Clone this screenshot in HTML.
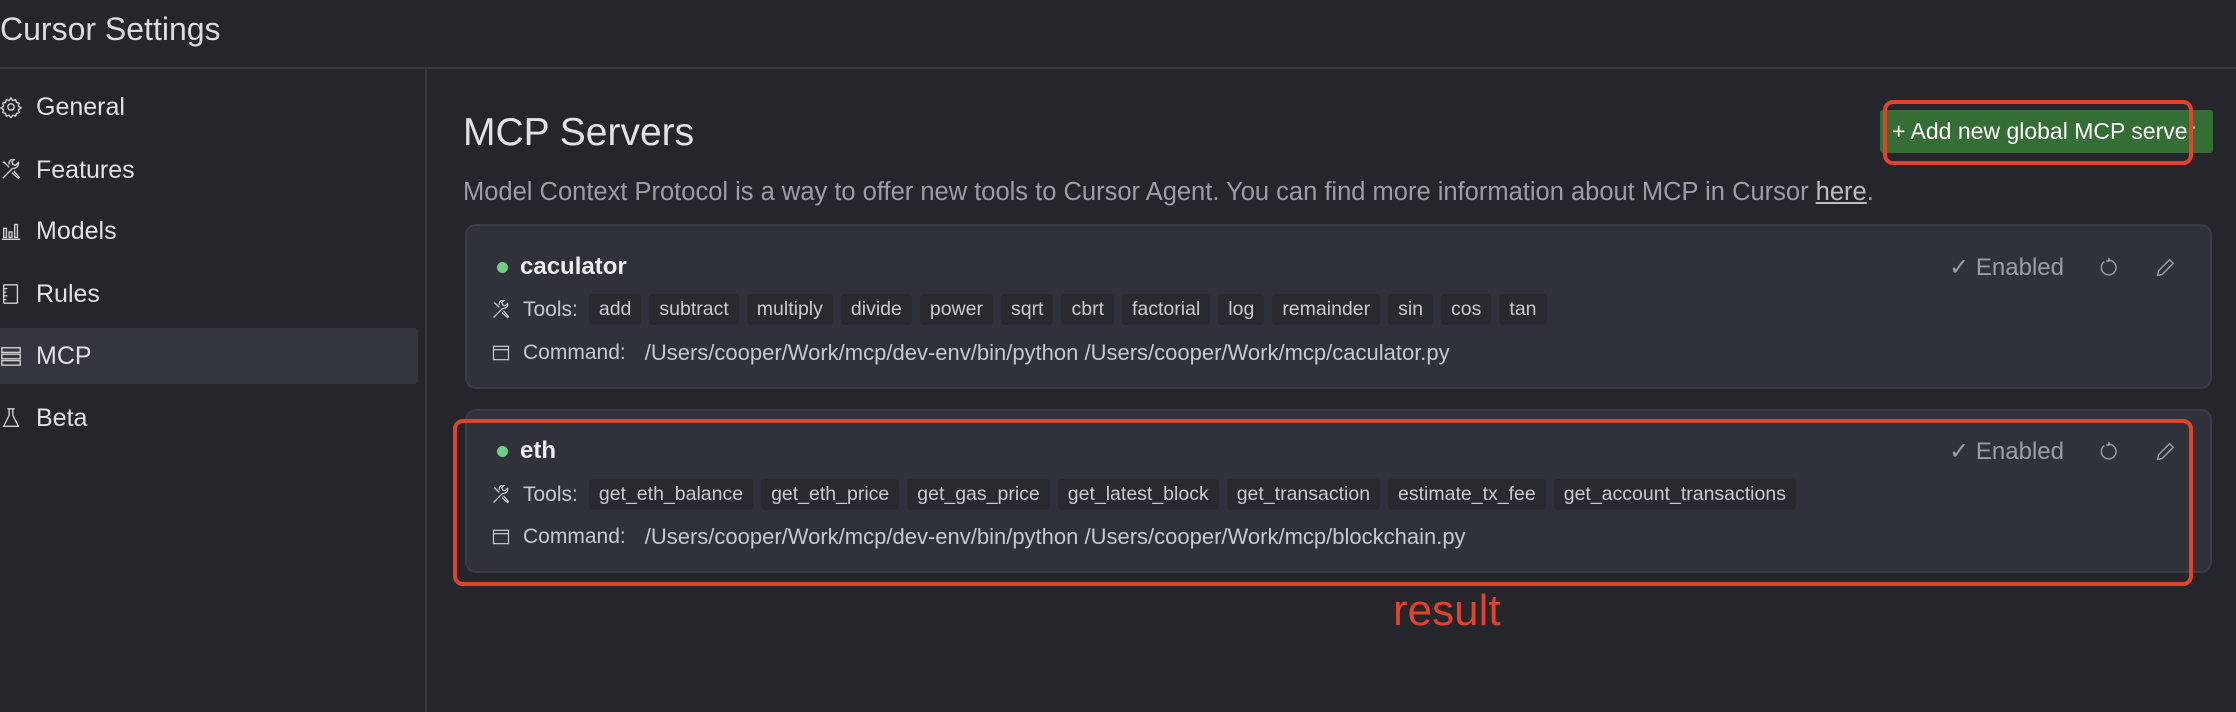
<!DOCTYPE html>
<html><head><meta charset="utf-8"><style>
*{box-sizing:border-box;margin:0;padding:0}
body{width:2236px;height:712px;background:#24262b;font-family:"Liberation Sans",sans-serif;color:#d4d6da;position:relative;overflow:hidden}
.abs{position:absolute}
.hdr{left:0;top:0;width:2236px;height:69px;border-bottom:2px solid #3a3c42}
.title{left:0;top:11px;font-size:32px;color:#dcdde0}
.div{left:425px;top:69px;width:2px;height:643px;background:#35373c}
.nav{left:0;width:418px;height:56px;display:flex;align-items:center;font-size:25px;color:#e0e1e4}
.nav svg{width:22px;height:22px;margin-right:14px;flex:none}
.nav.act{background:#33363c;border-radius:0 4px 4px 0}
h1{position:absolute;left:463px;top:111px;font-size:39px;font-weight:normal;color:#e2e3e6}
.desc{left:463px;top:178px;font-size:25.5px;color:#9a9ea6}
.desc u{color:#b9bcc2}
.btn{left:1880px;top:110px;width:333px;height:43px;background:#356e35;color:#fff;font-size:23px;display:flex;align-items:center;padding-left:12px;border-radius:3px}
.rbox{border:4px solid #e2412a;border-radius:10px}
.card{left:465px;width:1747px;background:#2f323a;border:2px solid #3a3d45;border-radius:11px}
.name{position:absolute;left:30px;font-size:24px;font-weight:bold;color:#eceef0;display:flex;align-items:center}
.name i{display:inline-block;width:11px;height:11px;border-radius:50%;background:#6fcf84;margin-right:12px}
.row{position:absolute;left:24px;display:flex;align-items:center;font-size:21px;color:#c5c8cd}
.row svg{width:20px;height:20px;margin-right:12px}
.row .lbl{margin-right:11px}
.tag{background:#282a30;border-radius:4px;padding:0 10px;height:31px;line-height:31px;margin-right:8px;font-size:19.5px;color:#c8cacf}
.cmd{margin-left:8px;font-size:22px}
.right{position:absolute;right:34px;display:flex;align-items:center;font-size:24px;color:#9a9da4}
.right svg{margin-left:34px}
</style></head><body>
<div class="abs hdr"></div>
<div class="abs title">Cursor Settings</div>
<div class="abs div"></div>

<div class="abs nav" style="top:79px"><svg viewBox="0 0 24 24" fill="none" stroke="#cfd1d5" stroke-width="1.5"><circle cx="12" cy="12" r="3.5"/><path d="M12 2l2 3 3-1 1 3 3 1-1 3 3 2-3 2 1 3-3 1-1 3-3-1-2 3-2-3-3 1-1-3-3-1 1-3-3-2 3-2-1-3 3-1 1-3 3 1z"/></svg>General</div>
<div class="abs nav" style="top:142px"><svg viewBox="0 0 24 24" fill="none" stroke="#cfd1d5" stroke-width="1.5"><path d="M3 21l11-11M14 10a5 5 0 0 0 6-6l-3 3-3-1-1-3 3-3a5 5 0 0 0-6 6M4 3l6 6M3 4l2-1M13 15l7 6 1-1-6-7"/></svg>Features</div>
<div class="abs nav" style="top:203px"><svg viewBox="0 0 24 24" fill="none" stroke="#cfd1d5" stroke-width="1.5"><path d="M2 21h20M4 9h3v10H4zM10 13h3v6h-3zM16 5h3v14h-3z"/></svg>Models</div>
<div class="abs nav" style="top:266px"><svg viewBox="0 0 24 24" fill="none" stroke="#cfd1d5" stroke-width="1.5"><rect x="4" y="2" width="15" height="20" rx="1"/><path d="M4 6h4M4 10h3M4 14h4M4 18h3"/></svg>Rules</div>
<div class="abs nav act" style="top:328px"><svg viewBox="0 0 24 24" fill="none" stroke="#cfd1d5" stroke-width="1.5"><rect x="2" y="3" width="20" height="5"/><rect x="2" y="10" width="20" height="5"/><rect x="2" y="17" width="20" height="5"/></svg>MCP</div>
<div class="abs nav" style="top:390px"><svg viewBox="0 0 24 24" fill="none" stroke="#cfd1d5" stroke-width="1.5"><path d="M8 2h8M10 2v7L4 21h16L14 9V2"/></svg>Beta</div>

<h1>MCP Servers</h1>
<div class="abs btn">+ Add new global MCP server</div>
<div class="abs rbox" style="left:1883px;top:100px;width:310px;height:65px"></div>
<div class="abs desc">Model Context Protocol is a way to offer new tools to Cursor Agent. You can find more information about MCP in Cursor <u>here</u>.</div>

<div class="abs card" style="top:224px;height:165px">
 <div class="name" style="top:27px"><i></i>caculator</div>
 <div class="right" style="top:27px"><span>✓ Enabled</span><svg width="22" height="22" viewBox="0 0 24 24" fill="none" stroke="#9a9da4" stroke-width="1.6"><path d="M7 5a8 8 0 1 0 5-1.5M12 1l0 3.5-3 0"/></svg><svg width="22" height="22" viewBox="0 0 24 24" fill="none" stroke="#9a9da4" stroke-width="1.6"><path d="M4 20l1-5L17 3l4 4L9 19z"/></svg></div>
 <div class="row" style="top:68px"><svg viewBox="0 0 24 24" fill="none" stroke="#c5c8cd" stroke-width="1.5"><path d="M3 21l11-11M14 10a5 5 0 0 0 6-6l-3 3-3-1-1-3 3-3a5 5 0 0 0-6 6M4 3l6 6M13 15l7 6 1-1-6-7"/></svg><span class="lbl">Tools:</span><span class="tag">add</span><span class="tag">subtract</span><span class="tag">multiply</span><span class="tag">divide</span><span class="tag">power</span><span class="tag">sqrt</span><span class="tag">cbrt</span><span class="tag">factorial</span><span class="tag">log</span><span class="tag">remainder</span><span class="tag">sin</span><span class="tag">cos</span><span class="tag">tan</span></div>
 <div class="row" style="top:114px"><svg viewBox="0 0 24 24" fill="none" stroke="#c5c8cd" stroke-width="1.5"><rect x="3" y="4" width="18" height="16"/><path d="M3 8h18"/></svg><span class="lbl">Command:</span><span class="cmd">/Users/cooper/Work/mcp/dev-env/bin/python /Users/cooper/Work/mcp/caculator.py</span></div>
</div>

<div class="abs card" style="top:409px;height:164px">
 <div class="name" style="top:26px"><i></i>eth</div>
 <div class="right" style="top:26px"><span>✓ Enabled</span><svg width="22" height="22" viewBox="0 0 24 24" fill="none" stroke="#9a9da4" stroke-width="1.6"><path d="M7 5a8 8 0 1 0 5-1.5M12 1l0 3.5-3 0"/></svg><svg width="22" height="22" viewBox="0 0 24 24" fill="none" stroke="#9a9da4" stroke-width="1.6"><path d="M4 20l1-5L17 3l4 4L9 19z"/></svg></div>
 <div class="row" style="top:68px"><svg viewBox="0 0 24 24" fill="none" stroke="#c5c8cd" stroke-width="1.5"><path d="M3 21l11-11M14 10a5 5 0 0 0 6-6l-3 3-3-1-1-3 3-3a5 5 0 0 0-6 6M4 3l6 6M13 15l7 6 1-1-6-7"/></svg><span class="lbl">Tools:</span><span class="tag">get_eth_balance</span><span class="tag">get_eth_price</span><span class="tag">get_gas_price</span><span class="tag">get_latest_block</span><span class="tag">get_transaction</span><span class="tag">estimate_tx_fee</span><span class="tag">get_account_transactions</span></div>
 <div class="row" style="top:113px"><svg viewBox="0 0 24 24" fill="none" stroke="#c5c8cd" stroke-width="1.5"><rect x="3" y="4" width="18" height="16"/><path d="M3 8h18"/></svg><span class="lbl">Command:</span><span class="cmd">/Users/cooper/Work/mcp/dev-env/bin/python /Users/cooper/Work/mcp/blockchain.py</span></div>
</div>
<div class="abs rbox" style="left:453px;top:419px;width:1740px;height:167px"></div>
<div class="abs" style="left:1393px;top:586px;font-size:44px;color:#e2412a">result</div>
</body></html>
